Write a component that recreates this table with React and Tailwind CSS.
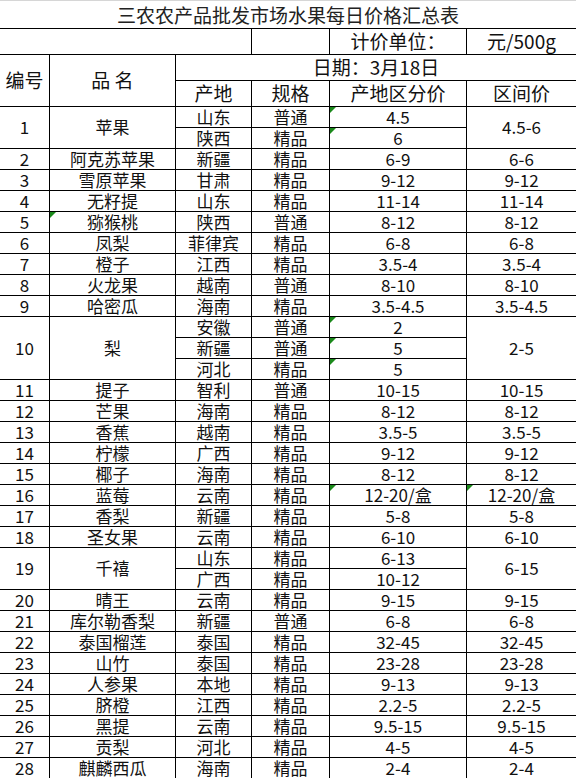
import React from "react";

const rows = [
  { n: 1, name: "苹果", subs: [["山东", "普通", "4.5", true], ["陕西", "精品", "6", true]], range: "4.5-6" },
  { n: 2, name: "阿克苏苹果", subs: [["新疆", "精品", "6-9"]], range: "6-6" },
  { n: 3, name: "雪原苹果", subs: [["甘肃", "精品", "9-12"]], range: "9-12" },
  { n: 4, name: "无籽提", subs: [["山东", "精品", "11-14"]], range: "11-14" },
  { n: 5, name: "猕猴桃", subs: [["陕西", "普通", "8-12"]], range: "8-12", nameMark: true },
  { n: 6, name: "凤梨", subs: [["菲律宾", "精品", "6-8"]], range: "6-8" },
  { n: 7, name: "橙子", subs: [["江西", "精品", "3.5-4"]], range: "3.5-4" },
  { n: 8, name: "火龙果", subs: [["越南", "普通", "8-10"]], range: "8-10" },
  { n: 9, name: "哈密瓜", subs: [["海南", "精品", "3.5-4.5"]], range: "3.5-4.5" },
  { n: 10, name: "梨", subs: [["安徽", "普通", "2", true], ["新疆", "普通", "5", true], ["河北", "精品", "5", true]], range: "2-5" },
  { n: 11, name: "提子", subs: [["智利", "普通", "10-15"]], range: "10-15" },
  { n: 12, name: "芒果", subs: [["海南", "精品", "8-12"]], range: "8-12" },
  { n: 13, name: "香蕉", subs: [["越南", "精品", "3.5-5"]], range: "3.5-5" },
  { n: 14, name: "柠檬", subs: [["广西", "精品", "9-12"]], range: "9-12" },
  { n: 15, name: "椰子", subs: [["海南", "精品", "8-12"]], range: "8-12" },
  { n: 16, name: "蓝莓", subs: [["云南", "精品", "12-20/盒", true]], range: "12-20/盒", rangeMark: true },
  { n: 17, name: "香梨", subs: [["新疆", "精品", "5-8"]], range: "5-8" },
  { n: 18, name: "圣女果", subs: [["云南", "精品", "6-10"]], range: "6-10" },
  { n: 19, name: "千禧", subs: [["山东", "精品", "6-13"], ["广西", "精品", "10-12"]], range: "6-15" },
  { n: 20, name: "晴王", subs: [["云南", "精品", "9-15"]], range: "9-15" },
  { n: 21, name: "库尔勒香梨", subs: [["新疆", "普通", "6-8"]], range: "6-8" },
  { n: 22, name: "泰国榴莲", subs: [["泰国", "精品", "32-45"]], range: "32-45" },
  { n: 23, name: "山竹", subs: [["泰国", "精品", "23-28"]], range: "23-28" },
  { n: 24, name: "人参果", subs: [["本地", "精品", "9-13"]], range: "9-13" },
  { n: 25, name: "脐橙", subs: [["江西", "精品", "2.2-5"]], range: "2.2-5" },
  { n: 26, name: "黑提", subs: [["云南", "精品", "9.5-15"]], range: "9.5-15" },
  { n: 27, name: "贡梨", subs: [["河北", "精品", "4-5"]], range: "4-5" },
  { n: 28, name: "麒麟西瓜", subs: [["海南", "精品", "2-4"]], range: "2-4" },
];

function Tri() {
  return (
    <span className="absolute left-0 top-0 h-[6px] w-[6px] bg-[#1b8a1b] [clip-path:polygon(0_0,100%_0,0_100%)]" />
  );
}

function Cell({ children, className = "", last = false, mark = false }) {
  return (
    <div
      className={`relative flex items-center justify-center whitespace-nowrap border-b border-black leading-[1.1] ${
        last ? "" : "border-r"
      } ${className}`}
    >
      {mark && <Tri />}
      {children}
    </div>
  );
}

export default function App() {
  return (
    <div className="w-[576px] bg-white font-['Noto_Sans_CJK_SC','Noto_Sans',sans-serif] text-[#111]">
      <div className="grid grid-cols-[50px_126px_76px_78px_137px_109px] grid-rows-[28px_26px_26px_26px_repeat(32,21px)] border-t border-t-[#d6d6d6]">
        {/* title */}
        <Cell className="col-span-6 pt-[2px] text-[19px] text-[#222]" last>
          三农农产品批发市场水果每日价格汇总表
        </Cell>
        {/* unit row */}
        <Cell className="col-span-3" />
        <Cell />
        <Cell className="text-[19px]">计价单位：</Cell>
        <Cell className="text-[19px]" last>
          元/500g
        </Cell>
        {/* header rows */}
        <Cell className="row-span-2 text-[19px]">编号</Cell>
        <Cell className="row-span-2 text-[19px]">品&nbsp;名</Cell>
        <Cell className="col-span-4 text-[19px]" last>
          日期：3月18日
        </Cell>
        <Cell className="text-[19px]">产地</Cell>
        <Cell className="text-[19px]">规格</Cell>
        <Cell className="text-[19px]">产地区分价</Cell>
        <Cell className="text-[19px]" last>
          区间价
        </Cell>
        {/* data */}
        {rows.map((r) => {
          const span =
            r.subs.length === 3 ? "row-span-3" : r.subs.length === 2 ? "row-span-2" : "";
          const out = [];
          out.push(
            <Cell key={`${r.n}-n`} className={`${span} text-[17px]`}>
              {r.n}
            </Cell>
          );
          out.push(
            <Cell key={`${r.n}-name`} className={`${span} text-[17px]`} mark={r.nameMark}>
              {r.name}
            </Cell>
          );
          r.subs.forEach((s, i) => {
            out.push(
              <Cell key={`${r.n}-${i}-o`} className="text-[17px]">
                {s[0]}
              </Cell>
            );
            out.push(
              <Cell key={`${r.n}-${i}-g`} className="text-[17px]">
                {s[1]}
              </Cell>
            );
            out.push(
              <Cell key={`${r.n}-${i}-p`} className="text-[17px]" mark={s[3]}>
                {s[2]}
              </Cell>
            );
            if (i === 0) {
              out.push(
                <Cell key={`${r.n}-r`} className={`${span} text-[17px]`} last mark={r.rangeMark}>
                  {r.range}
                </Cell>
              );
            }
          });
          return out;
        })}
      </div>
    </div>
  );
}
